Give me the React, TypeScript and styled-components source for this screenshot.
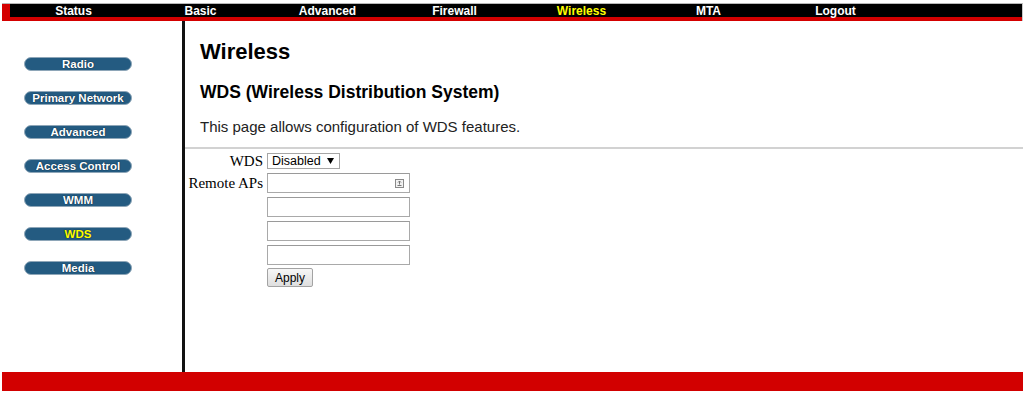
import React from 'react';
import styled, { createGlobalStyle } from 'styled-components';

const GlobalStyle = createGlobalStyle`
	body {
		margin: 0;
		background: #fff;
		font-family: "Liberation Sans", Arial, sans-serif;
	}
`;

const Frame = styled.div`
	padding: 3px 2px 0 2px;
	width: 1025px;
	box-sizing: border-box;
`;

const TopBar = styled.div`
	background: #d40000;
	border-top: 1px solid #b8b8b8;
	border-right: 1px solid #c8c8c8;
	padding: 0 0 4px 8px;
`;

const Nav = styled.nav`
	display: flex;
	height: 13px;
	background: #000;
`;

const NavItem = styled.a<{ $active?: boolean }>`
	width: 127px;
	padding-top: 1px;
	text-align: center;
	font-size: 12px;
	font-weight: bold;
	line-height: 13px;
	color: ${(p) => (p.$active ? '#ffff00' : '#fff')};
	text-decoration: none;
`;

const Body = styled.div`
	display: flex;
	height: 351px;
`;

const Sidebar = styled.aside`
	width: 183px;
	box-sizing: border-box;
	border-right: 3px solid #111;
	padding: 36px 0 0 22px;
	display: flex;
	flex-direction: column;
	gap: 20px;
`;

const SideButton = styled.a<{ $active?: boolean }>`
	display: block;
	width: 108px;
	height: 14px;
	box-sizing: border-box;
	border: 1px solid #8ea6b8;
	border-radius: 7px;
	background: #245b81;
	color: ${(p) => (p.$active ? '#ffff00' : '#fff')};
	font-size: 11.5px;
	font-weight: bold;
	line-height: 12px;
	text-align: center;
	text-decoration: none;
	text-shadow: 0 0 1px #0b2c44, 0 0 1px #0b2c44;
	white-space: nowrap;
`;

const Main = styled.main`
	flex: 1;
	padding-top: 18px;
`;

const Title = styled.h1`
	margin: 0 0 17px;
	padding-left: 15px;
	font-size: 22px;
	line-height: 26px;
	font-weight: bold;
	color: #000;
`;

const SubTitle = styled.h2`
	margin: 0 0 15px;
	padding-left: 15px;
	font-size: 17.5px;
	line-height: 21px;
	font-weight: bold;
	color: #000;
`;

const Intro = styled.p`
	margin: 0 0 11px;
	padding-left: 15px;
	font-size: 15px;
	line-height: 18px;
	color: #222;
`;

const Rule = styled.div`
	height: 2px;
	background: #d2d2d2;
`;

const Form = styled.form`
	display: grid;
	grid-template-columns: 78px auto;
	column-gap: 4px;
	row-gap: 4px;
	padding-top: 4px;
	justify-content: start;
`;

const Label = styled.label<{ $lh: number }>`
	text-align: right;
	font-family: "Liberation Serif", "Times New Roman", serif;
	font-size: 15px;
	line-height: ${(p) => p.$lh}px;
	color: #000;
	white-space: nowrap;
`;

const SelectBox = styled.div`
	display: flex;
	align-items: center;
	gap: 6px;
	width: 73px;
	height: 16px;
	box-sizing: border-box;
	border: 1px solid #a6a6a6;
	padding-left: 4px;
	font-size: 12.5px;
	color: #000;
`;

const Stack = styled.div`
	display: flex;
	flex-direction: column;
	gap: 4px;
	align-items: flex-start;
`;

const FieldBox = styled.div`
	display: flex;
	align-items: center;
	width: 143px;
	height: 20px;
	box-sizing: border-box;
	border: 1px solid #a9a9a9;
	border-top-color: #9a9a9a;
	background: #fff;
	padding-right: 5px;
`;

const Field = styled.input`
	flex: 1;
	min-width: 0;
	border: none;
	outline: none;
	background: transparent;
	height: 100%;
	padding: 0 2px;
	font-size: 13px;
`;

const ApplyButton = styled.button`
	width: 46px;
	height: 19px;
	box-sizing: border-box;
	border: 1px solid #a3a3a3;
	border-radius: 2px;
	background: linear-gradient(#f7f7f7, #dedede);
	padding: 0;
	margin-top: -1px;
	font-family: "Liberation Sans", Arial, sans-serif;
	font-size: 12px;
	color: #000;
`;

const Footer = styled.div`
	height: 19px;
	background: #d20000;
`;

const navItems = ['Status', 'Basic', 'Advanced', 'Firewall', 'Wireless', 'MTA', 'Logout'];
const sideItems = ['Radio', 'Primary Network', 'Advanced', 'Access Control', 'WMM', 'WDS', 'Media'];

const KeyIcon = () => (
	<svg width="9" height="9" viewBox="0 0 9 9">
		<rect x="0.5" y="0.5" width="8" height="8" fill="#f2f2f2" stroke="#8a8a8a" />
		<path d="M4.5 2 L4.5 5.5 M3 3.5 L4.5 2 L6 3.5 M2.5 6.5 L6.5 6.5" stroke="#777" strokeWidth="1" fill="none" />
	</svg>
);

const Arrow = () => (
	<svg width="7" height="6" viewBox="0 0 7 6">
		<path d="M0 0 L7 0 L3.5 6 Z" fill="#000" />
	</svg>
);

const App = () => {
	return (
		<Frame>
			<GlobalStyle />
			<TopBar>
				<Nav>
					{navItems.map((n) => (
						<NavItem key={n} $active={n === 'Wireless'}>
							{n}
						</NavItem>
					))}
				</Nav>
			</TopBar>
			<Body>
				<Sidebar>
					{sideItems.map((s) => (
						<SideButton key={s} $active={s === 'WDS'}>
							{s}
						</SideButton>
					))}
				</Sidebar>
				<Main>
					<Title>Wireless</Title>
					<SubTitle>WDS (Wireless Distribution System)</SubTitle>
					<Intro>This page allows configuration of WDS features.</Intro>
					<Rule />
					<Form onSubmit={(e) => e.preventDefault()}>
						<Label $lh={16}>WDS</Label>
						<div>
							<SelectBox>
								<span>Disabled</span>
								<Arrow />
							</SelectBox>
						</div>
						<Label $lh={20}>Remote APs</Label>
						<Stack>
							<FieldBox>
								<Field />
								<KeyIcon />
							</FieldBox>
							<FieldBox>
								<Field />
							</FieldBox>
							<FieldBox>
								<Field />
							</FieldBox>
							<FieldBox>
								<Field />
							</FieldBox>
							<ApplyButton type="submit">Apply</ApplyButton>
						</Stack>
					</Form>
				</Main>
			</Body>
			<Footer />
		</Frame>
	);
};

export default App;
